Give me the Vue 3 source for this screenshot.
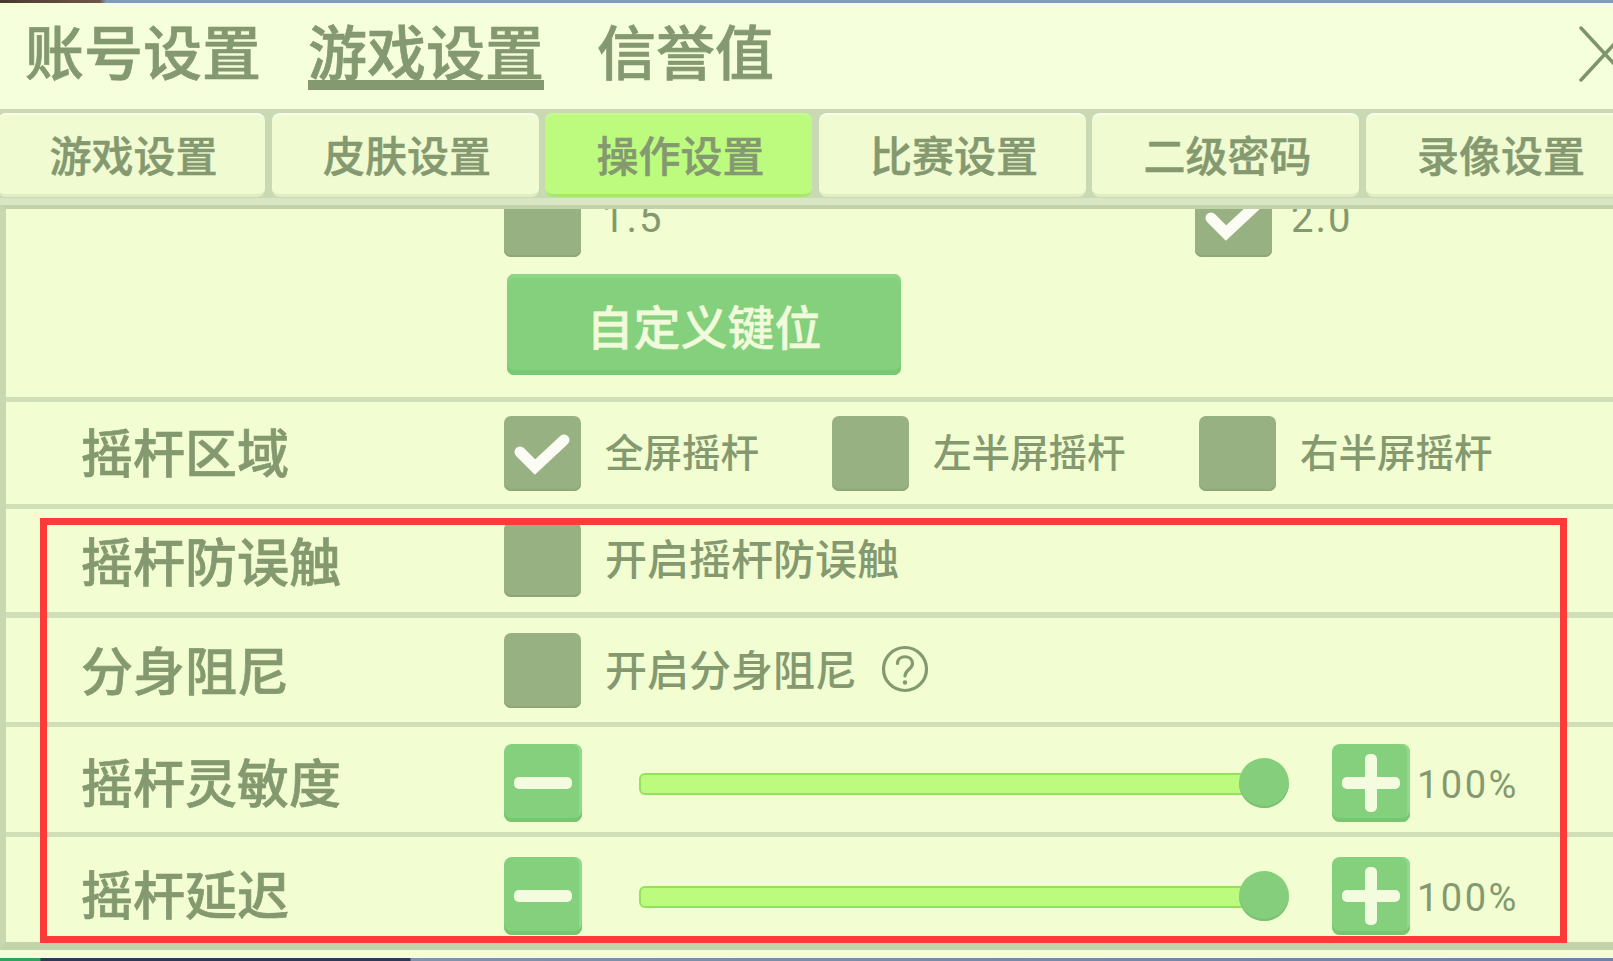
<script setup>
const titles = [
  { text: '账号设置', cls: 't1' },
  { text: '游戏设置', cls: 't2 on' },
  { text: '信誉值', cls: 't3' },
]
const tabs = ['游戏设置', '皮肤设置', '操作设置', '比赛设置', '二级密码', '录像设置']
const sliders = [
  { label: '摇杆灵敏度', cls: 'r4', value: '100%' },
  { label: '摇杆延迟', cls: 'r5', value: '100%' },
]
</script>

<template>
  <div class="page">
    <div class="scene-top"></div>
    <header class="head">
      <span v-for="t in titles" :key="t.text" class="title" :class="t.cls">{{ t.text }}</span>
      <svg class="close" width="34" height="56" viewBox="0 0 34 56">
        <path d="M2 2 L50 54 M2 54 L50 2" fill="none" stroke="#7d9568" stroke-width="3.5" stroke-linecap="round" />
      </svg>
    </header>
    <nav class="tabs">
      <div v-for="(t, i) in tabs" :key="t" class="tab" :class="{ active: i === 2 }">{{ t }}</div>
    </nav>
    <div class="rule-light"></div>
    <main class="panel">
      <section class="row r0">
        <div class="clip">
          <div class="opt-line">
            <div class="opt w691">
              <span class="check"></span>
              <span class="num">1.5</span>
            </div>
            <div class="opt">
              <span class="check">
                <svg width="76" height="75" viewBox="0 0 76 75"><path d="M16 36 L31 51 L60 24" fill="none" stroke="#fbfdf4" stroke-width="11" stroke-linecap="round" /></svg>
              </span>
              <span class="num n2">2.0</span>
            </div>
          </div>
          <button class="custom">自定义键位</button>
        </div>
      </section>
      <section class="row r1">
        <div class="label">摇杆区域</div>
        <div class="opt w328">
          <span class="check">
            <svg width="76" height="75" viewBox="0 0 76 75"><path d="M16 36 L31 51 L60 24" fill="none" stroke="#fbfdf4" stroke-width="11" stroke-linecap="round" /></svg>
          </span>
          <span class="opt-text">全屏摇杆</span>
        </div>
        <div class="opt w367"><span class="check"></span><span class="opt-text">左半屏摇杆</span></div>
        <div class="opt"><span class="check"></span><span class="opt-text">右半屏摇杆</span></div>
      </section>
      <section class="row r2">
        <div class="label">摇杆防误触</div>
        <div class="opt"><span class="check"></span><span class="opt-text big">开启摇杆防误触</span></div>
      </section>
      <section class="row r3">
        <div class="label">分身阻尼</div>
        <div class="opt">
          <span class="check"></span>
          <span class="opt-text big">开启分身阻尼</span>
          <svg class="help" width="48" height="48" viewBox="0 0 48 48">
            <circle cx="24" cy="24" r="21.5" fill="none" stroke="#84996f" stroke-width="3.2" />
            <path d="M16.5 18.5 C16.5 9.5 31.5 9.5 31.5 18.5 C31.5 24 24 24.5 24 31" fill="none" stroke="#84996f" stroke-width="3.2" stroke-linecap="round" />
            <circle cx="24" cy="37.5" r="2.2" fill="#84996f" />
          </svg>
        </div>
      </section>
      <section v-for="s in sliders" :key="s.label" class="row" :class="s.cls">
        <div class="label">{{ s.label }}</div>
        <div class="step">
          <svg width="58" height="12" viewBox="0 0 58 12"><rect width="58" height="12" rx="5" fill="#f4fce0" /></svg>
        </div>
        <div class="slider">
          <div class="track"></div>
          <div class="knob"></div>
        </div>
        <div class="step">
          <svg width="58" height="58" viewBox="0 0 58 58">
            <rect y="23" width="58" height="12" rx="5" fill="#f4fce0" />
            <rect x="23" width="12" height="58" rx="5" fill="#f4fce0" />
          </svg>
        </div>
        <div class="pct">{{ s.value }}</div>
      </section>
      <div class="redbox"></div>
    </main>
    <div class="foot"></div>
    <div class="scene-bottom"></div>
  </div>
</template>

<style>
html, body { margin: 0; overflow: hidden; }
</style>

<style scoped>
.page {
  width: 1613px;
  height: 961px;
  overflow: hidden;
  background: #f3fdd2;
  display: flex;
  flex-direction: column;
  font-family: "Noto Sans CJK SC", "Noto Sans", sans-serif;
  color: #84996f;
}
.scene-top {
  height: 3px;
  flex: none;
  background: linear-gradient(90deg, #4a3a2c 0, #6d5648 100px, #7f9dba 106px, #7f9dba 1613px);
}
.head {
  height: 106px;
  flex: none;
  background: #f6ffdc;
  display: flex;
  align-items: flex-start;
  position: relative;
  padding-left: 25px;
  box-sizing: border-box;
}
.title {
  font-size: 59px;
  line-height: 59px;
  margin-top: 17px;
  font-weight: 500;
  -webkit-text-stroke: 0.7px #84996f;
  height: 60px;
}
.t2 { margin-left: 47px; border-bottom: 10px solid #84996f; }
.t3 { margin-left: 53px; }
.close { position: absolute; right: 0; top: 23px; }
.tabs {
  height: 92px;
  flex: none;
  display: flex;
  gap: 6.5px;
  box-sizing: border-box;
  padding-top: 4px;
  padding-bottom: 4px;
  background: #c9d9b3;
  overflow: hidden;
}
.tab {
  flex: 0 0 267px;
  height: 84px;
  box-sizing: border-box;
  background: #f1fbd2;
  border-radius: 8px;
  border-top: 2px solid #f8ffe6;
  border-bottom: 3px solid #e2edc4;
  padding-left: 4px;
  font-size: 42px;
  font-weight: 500;
  -webkit-text-stroke: 0.5px #84996f;
  line-height: 78px;
  text-align: center;
}
.tab:first-child { margin-left: -2px; }
.tab.active {
  background: #bdfb7f;
  border-top-color: #c6fc8f;
  border-bottom-color: #a6e96a;
}
.rule-light { height: 7px; flex: none; background: #d9e6c4; margin-top: -3px; }
.panel {
  flex: none;
  position: relative;
  height: 745px;
  box-sizing: border-box;
  border-top: 4px solid #c2d3a9;
  border-bottom: 8px solid #c3d4ac;
  border-left: 6px solid #c8d9b2;
  display: flex;
  flex-direction: column;
  background: #f2fdd1;
}
.row {
  display: flex;
  align-items: center;
  flex: none;
  box-sizing: border-box;
  border-bottom: 5px solid #d0dfb7;
  padding-left: 75px;
}
.r0 { height: 193px; padding-left: 498px; overflow: hidden; align-items: flex-start; }
.r1 { height: 107px; }
.r2 { height: 109px; padding-bottom: 2px; border-bottom-width: 6px; }
.r3 { height: 109px; }
.r4 { height: 110px; padding-top: 7px; }
.r5 { height: 105px; padding-top: 13px; border-bottom: 0; }
.clip { margin-top: -27px; }
.opt-line { display: flex; align-items: center; }
.opt { display: flex; align-items: center; flex: none; }
.w691 { width: 691px; }
.w328 { width: 328px; }
.w367 { width: 367px; }
.label {
  flex: 0 0 423px;
  font-size: 52px;
  font-weight: 500;
  -webkit-text-stroke: 0.6px #84996f;
  line-height: 60px;
  margin-top: -5px;
}
.r2 .label { margin-top: 0; }
.r3 .label { margin-top: -2px; }
.r5 .label { margin-top: -7px; }
.check {
  width: 77px;
  height: 75px;
  flex: none;
  display: block;
  background: #98b182;
  border-radius: 7px;
  box-shadow: inset 0 -2px 0 #8ea678;
}
.check svg { display: block; }
.opt-text {
  margin-left: 24px;
  margin-bottom: 7px;
  font-size: 38.5px;
  font-weight: 500;
  line-height: 50px;
}
.opt-text.big { font-size: 42px; margin-bottom: 5px; }
.num {
  margin-left: 21px;
  margin-bottom: 2px;
  font-family: Roboto, sans-serif;
  font-size: 40px;
  font-weight: 400;
  letter-spacing: 2px;
  line-height: 50px;
}
.n2 { margin-left: 19px; }
.help { margin-left: 24px; flex: none; margin-top: -2px; }
.custom {
  display: block;
  margin-top: 17px;
  margin-left: 3px;
  width: 394px;
  height: 101px;
  padding: 0 0 1px;
  border: 0;
  border-radius: 7px;
  background: #84d07d;
  box-shadow: inset 0 -5px 0 #7ac874, inset 0 4px 0 #8fd587;
  color: #f1fbdc;
  font-family: inherit;
  font-size: 47px;
  font-weight: 500;
  -webkit-text-stroke: 0.4px #f1fbdc;
}
.step {
  width: 78px;
  height: 78px;
  flex: none;
  background: #84d07d;
  border-radius: 8px;
  box-shadow: inset 0 -4px 0 #78c572, inset -3px 0 0 #93d98b;
  display: flex;
  align-items: center;
  justify-content: center;
}
.step svg { display: block; }
.slider {
  width: 650px;
  height: 50px;
  flex: none;
  margin: 0 43px 0 57px;
  position: relative;
  display: flex;
  align-items: center;
}
.track {
  width: 620px;
  height: 22px;
  margin-top: 2px;
  box-sizing: border-box;
  background: #bdfb7f;
  border: 2px solid #93e25c;
  border-radius: 6px;
}
.knob {
  position: absolute;
  right: 0;
  top: 0;
  width: 50px;
  height: 50px;
  border-radius: 50%;
  background: #84ce7c;
  box-shadow: inset 0 -2px 0 #78c272;
}
.pct {
  margin-left: 7px;
  margin-top: 4px;
  font-family: Roboto, sans-serif;
  font-size: 38px;
  font-weight: 400;
  letter-spacing: 2.5px;
  line-height: 50px;
}
.redbox {
  position: absolute;
  left: 34px;
  top: 309px;
  width: 1527px;
  height: 425px;
  box-sizing: border-box;
  border: 7px solid #fd3a3a;
  pointer-events: none;
}
.foot { height: 8px; flex: none; background: #f5fcdb; }
.scene-bottom {
  height: 3px;
  flex: none;
  background: linear-gradient(90deg, #2fa35f 0, #2fa35f 40px, #2d3a57 41px, #2d3a57 410px, #7f93aa 411px, #6b83a8 1613px);
}
</style>
